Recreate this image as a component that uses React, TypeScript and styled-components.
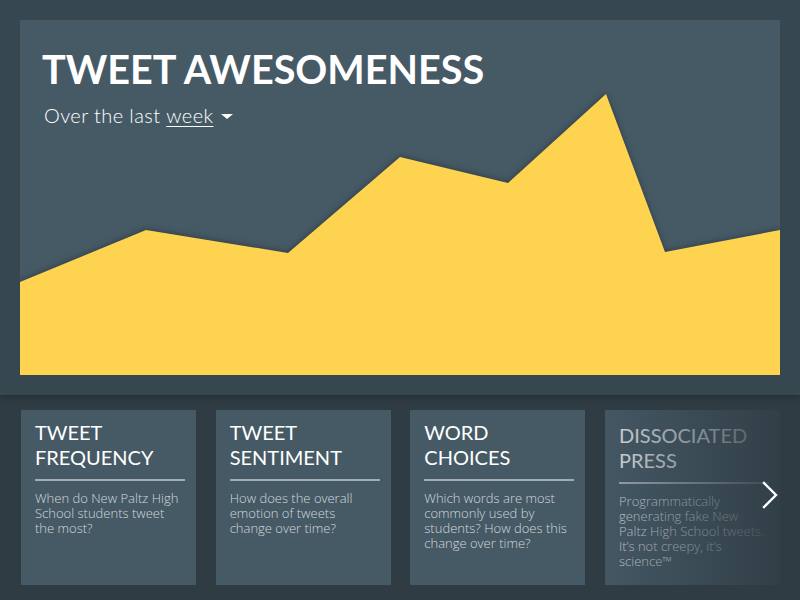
import styled, { createGlobalStyle } from 'styled-components'

const GlobalStyle = createGlobalStyle`
  html, body {
    margin: 0;
    padding: 0;
    background: #2f3c44;
  }
  * {
    box-sizing: border-box;
  }
`

const cards = [
  {
    title: ['TWEET', 'FREQUENCY'],
    text: 'When do New Paltz High School students tweet the most?',
  },
  {
    title: ['TWEET', 'SENTIMENT'],
    text: 'How does the overall emotion of tweets change over time?',
  },
  {
    title: ['WORD', 'CHOICES'],
    text: 'Which words are most commonly used by students? How does this change over time?',
  },
  {
    title: ['DISSOCIATED', 'PRESS'],
    text: 'Programmatically generating fake New Paltz High School tweets. It\u2019s not creepy, it\u2019s science\u2122',
  },
]

const points = '0,262 126,210 268,233 380,137 488,163 586,74 645,232 760,210 760,355 0,355'

const App = () => {
  return (
    <Page>
      <GlobalStyle />
      <Top>
        <Panel>
          <Chart viewBox="0 0 760 355" preserveAspectRatio="none">
            <polygon points={points} fill="#fed34f" />
          </Chart>
          <Header>
            <Title>TWEET AWESOMENESS</Title>
            <Subtitle>
              Over the last <u>week</u>
              <Caret />
            </Subtitle>
          </Header>
        </Panel>
      </Top>
      <Bottom>
        <CardRow>
          {cards.map((card, i) => (
            <Card key={i} $faded={i === cards.length - 1}>
              <CardTitle>
                {card.title[0]}
                <br />
                {card.title[1]}
              </CardTitle>
              <Rule />
              <CardText>{card.text}</CardText>
            </Card>
          ))}
        </CardRow>
        <Fade />
        <NextButton>
          <svg width="16" height="28" viewBox="0 0 16 28">
            <polyline
              points="2,2 14,14 2,26"
              fill="none"
              stroke="#ffffff"
              strokeWidth="2.4"
              strokeLinecap="square"
            />
          </svg>
        </NextButton>
      </Bottom>
    </Page>
  )
}

export default App

const Page = styled.div`
  width: 800px;
  height: 600px;
  overflow: hidden;
  display: flex;
  flex-direction: column;
  font-family: Lato, 'Open Sans', sans-serif;
  color: #ffffff;
`

const Top = styled.div`
  height: 395px;
  padding: 20px;
  background: #37474f;
  box-shadow: 0 2px 6px rgba(0, 0, 0, 0.25);
  position: relative;
  z-index: 1;
`

const Panel = styled.div`
  position: relative;
  width: 760px;
  height: 355px;
  background: #465a66;
  overflow: hidden;
`

const Chart = styled.svg`
  position: absolute;
  inset: 0;
  width: 100%;
  height: 100%;
  filter: drop-shadow(0 -1px 3px rgba(0, 0, 0, 0.3));
`

const Header = styled.div`
  position: relative;
  padding: 25px 22px;
`

const Title = styled.h1`
  margin: 0;
  font-size: 39.6px;
  font-weight: 700;
  line-height: 48px;
`

const Subtitle = styled.div`
  margin-top: 10px;
  margin-left: 2px;
  font-size: 20px;
  font-weight: 300;
  letter-spacing: 0.4px;
  display: flex;
  align-items: center;
  white-space: pre;

  u {
    text-underline-offset: 3px;
    text-decoration-thickness: 1px;
  }
`

const Caret = styled.span`
  margin-left: 8px;
  margin-top: 2px;
  width: 0;
  height: 0;
  border-left: 6px solid transparent;
  border-right: 6px solid transparent;
  border-top: 5px solid #ffffff;
`

const Bottom = styled.div`
  position: relative;
  flex: 1;
  padding: 15px 20px 0 21px;
  background: #2f3c44;
`

const CardRow = styled.div`
  display: flex;
  justify-content: space-between;
`

const Card = styled.div<{ $faded?: boolean }>`
  width: 175px;
  height: 175px;
  padding: ${(p) => (p.$faded ? '13px 11px 13px 14px' : '10px 11px 10px 14px')};
  background: #465a66;
  color: ${(p) => (p.$faded ? '#e4e8ea' : '#ffffff')};
`

const CardTitle = styled.div`
  font-size: 20px;
  line-height: 25px;
  font-weight: 400;
`

const Rule = styled.div`
  height: 2px;
  margin-top: 9px;
  background: #a3acb1;
`

const CardText = styled.p`
  margin: 10px 3px 0 0;
  font-family: 'Open Sans', Lato, sans-serif;
  font-size: 13px;
  line-height: 15px;
  font-weight: 300;
  color: #d2d8db;
`

const Fade = styled.div`
  position: absolute;
  top: 15px;
  right: 20px;
  width: 175px;
  height: 175px;
  background: linear-gradient(
    to right,
    rgba(47, 60, 68, 0.1) 0%,
    rgba(47, 60, 68, 0.45) 45%,
    rgba(47, 60, 68, 0.9) 100%
  );
`

const NextButton = styled.div`
  position: absolute;
  top: 86px;
  right: 22px;
  display: flex;
`
